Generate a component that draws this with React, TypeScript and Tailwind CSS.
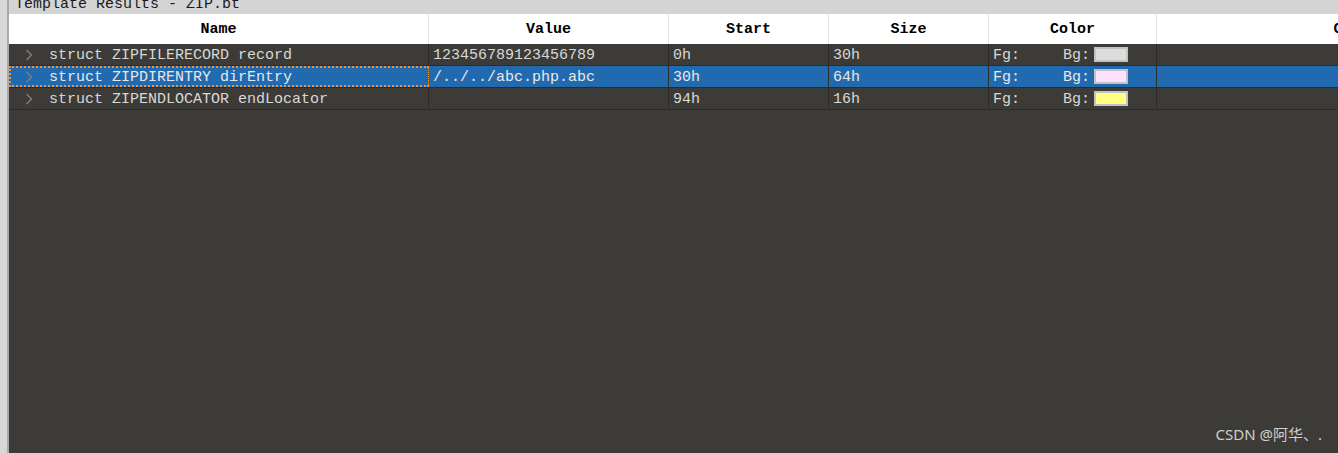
import React from "react";

const mono = { fontFamily: '"Liberation Mono", "DejaVu Sans Mono", monospace' };

type Row = {
  name: string;
  value: string;
  start: string;
  size: string;
  bg: string;
  selected?: boolean;
};

const rows: Row[] = [
  { name: "struct ZIPFILERECORD record", value: "123456789123456789", start: "0h", size: "30h", bg: "#dcdcdc" },
  { name: "struct ZIPDIRENTRY dirEntry", value: "/../../abc.php.abc", start: "30h", size: "64h", bg: "#ffe0ff", selected: true },
  { name: "struct ZIPENDLOCATOR endLocator", value: "", start: "94h", size: "16h", bg: "#ffff80" },
];

function Chevron() {
  return (
    <svg width="8" height="12" viewBox="0 0 8 12" className="shrink-0">
      <polyline points="1.5,1 6.5,6 1.5,11" fill="none" stroke="#808080" strokeWidth="1.4" />
    </svg>
  );
}

const headCell = "shrink-0 border-r border-[#e2e2e2] flex items-center justify-center pt-[3px]";

export default function App() {
  return (
    <div className="relative w-[1338px] h-[453px] overflow-hidden flex bg-[#3c3b37]" style={mono}>
      <div className="w-[7px] bg-[#d8d8d8] border-r-2 border-[#a9a9a9] shrink-0 box-content" />
      <div className="flex-1 flex flex-col min-w-0">
        <div className="h-[14px] bg-[#d4d4d4] overflow-hidden shrink-0">
          <div className="-mt-[4px] ml-[6px] text-[15px] leading-[18px] text-[#1a1a1a] whitespace-pre">Template Results - ZIP.bt</div>
        </div>
        <div className="h-[30px] bg-white flex shrink-0 text-[15px] font-bold text-black">
          <div className={`w-[420px] ${headCell}`}>Name</div>
          <div className={`w-[240px] ${headCell}`}>Value</div>
          <div className={`w-[160px] ${headCell}`}>Start</div>
          <div className={`w-[160px] ${headCell}`}>Size</div>
          <div className={`w-[168px] ${headCell}`}>Color</div>
          <div className="w-[416px] shrink-0 flex items-center justify-center pt-[3px]">Comment</div>
        </div>
        {rows.map((r) => (
          <div
            key={r.name}
            className={`h-[22px] flex shrink-0 border-b border-[#2c2b28] text-[15px] whitespace-pre ${
              r.selected ? "bg-[#226ab0] text-[#e8e8e8]" : "text-[#d8d8d8]"
            }`}
          >
            <div
              className={`w-[420px] shrink-0 border-r border-[#2c2b28] flex items-center ${
                r.selected ? "border-2 border-dotted border-[#f0923a] pl-[14px]" : "pl-[16px]"
              }`}
            >
              <Chevron />
              <span className="ml-[16px] pt-[3px]">{r.name}</span>
            </div>
            <div className="w-[240px] shrink-0 border-r border-[#2c2b28] flex items-center pl-[4px] pt-[3px]">{r.value}</div>
            <div className="w-[160px] shrink-0 border-r border-[#2c2b28] flex items-center pl-[4px] pt-[3px]">{r.start}</div>
            <div className="w-[160px] shrink-0 border-r border-[#2c2b28] flex items-center pl-[4px] pt-[3px]">{r.size}</div>
            <div className="w-[168px] shrink-0 border-r border-[#2c2b28] flex items-center pl-[4px]">
              <span className="w-[70px] pt-[3px]">Fg:</span>
              <span className="pt-[3px]">Bg:</span>
              <span
                className="ml-[4px] -mt-[1px] w-[34px] h-[15px] border-2 border-[#c2c2c2]"
                style={{ backgroundColor: r.bg }}
              />
            </div>
            <div className="flex-1" />
          </div>
        ))}
        <div className="flex-1" />
      </div>
      <div
        className="absolute right-[16px] bottom-[8px] text-[15px] text-[#cfcfcf]"
        style={{ fontFamily: '"Noto Sans", "Noto Sans CJK SC", sans-serif' }}
      >
        CSDN @阿华、.
      </div>
    </div>
  );
}
